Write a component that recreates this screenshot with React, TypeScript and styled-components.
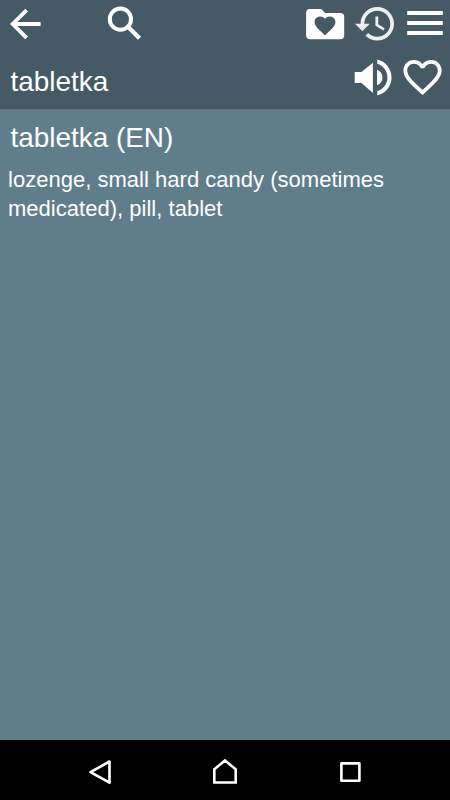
import React from "react";
import styled, { createGlobalStyle } from "styled-components";

const GlobalStyle = createGlobalStyle`
  * { box-sizing: border-box; }
  body {
    margin: 0;
    background: #607d8b;
    font-family: "Liberation Sans", Arial, sans-serif;
  }
`;

const Screen = styled.div`
  display: flex;
  flex-direction: column;
  width: 450px;
  height: 800px;
  overflow: hidden;
  background: #607d8b;
  color: #fff;
`;

const Header = styled.header`
  flex: none;
  height: 110px;
  background: #455a64;
  border-bottom: 1px solid #5b7480;
  box-shadow: inset 0 -2px 0 #4a5459;
`;

const Toolbar = styled.div`
  display: flex;
  align-items: center;
  height: 48px;
  padding: 0 5px 0 8px;
`;

const WordRow = styled.div`
  display: flex;
  align-items: center;
  height: 60px;
  padding: 0 5px 0 10.5px;
`;

const IconButton = styled.button<{ $width: number; $gap?: number }>`
  display: flex;
  flex: none;
  width: ${(p) => p.$width}px;
  height: 48px;
  margin: 0 0 0 ${(p) => p.$gap ?? 0}px;
  padding: 0;
  border: 0;
  background: none;
  color: #fff;
`;

const Glyph = styled.svg`
  display: block;
  width: 100%;
  height: 100%;
  fill: currentColor;
`;

const Spacer = styled.div`
  flex: 1;
`;

const Word = styled.h1`
  flex: 1;
  margin: 8px 0 0;
  font-size: 27.9px;
  line-height: 32px;
  font-weight: 400;
`;

const Entry = styled.main`
  flex: 1;
  padding: 12px 8px 0;
`;

const EntryTitle = styled.h2`
  margin: 0 0 11px 2.5px;
  font-size: 27.9px;
  line-height: 32px;
  font-weight: 400;
`;

const Definition = styled.p`
  margin: 0;
  font-size: 22px;
  line-height: 29px;
  letter-spacing: 0.02px;
`;

const NavBar = styled.nav`
  display: flex;
  flex: none;
  align-items: center;
  justify-content: center;
  gap: 77px;
  height: 60px;
  background: #000;
`;

const NavButton = styled(IconButton)`
  height: 60px;
`;

const NavGlyph = styled(Glyph)`
  fill: none;
  stroke: #fff;
  stroke-width: 2.6;
`;

export default function App() {
  return (
    <Screen>
      <GlobalStyle />
      <Header>
        <Toolbar>
          <IconButton $width={36} aria-label="Back">
            <Glyph viewBox="8 0 36 48">
              <path d="M26.6 10.1 12.7 24 26.6 37.9M12.7 24H40.6" fill="none" stroke="currentColor" strokeWidth="3.8" />
            </Glyph>
          </IconButton>
          <IconButton $width={36} $gap={62} aria-label="Search">
            <Glyph viewBox="106 0 36 48">
              <circle cx="120.4" cy="19.2" r="10.6" fill="none" stroke="currentColor" strokeWidth="4" />
              <path d="M128.2 27 139.5 38.2" fill="none" stroke="currentColor" strokeWidth="4.4" />
            </Glyph>
          </IconButton>
          <Spacer />
          <IconButton $width={42} aria-label="Favorites folder">
            <Glyph viewBox="304 0 42 48">
              <path
                fillRule="evenodd"
                d="M310 9H321.3L325.2 13H340.4Q344.2 13 344.2 16.8V35.3Q344.2 39.2 340.4 39.2H310Q306.1 39.2 306.1 35.3V12.8Q306.1 9 310 9ZM325 35.2 323.5 33.9C318.1 29 314.6 26 314.6 22.1 314.6 18.8 317 16.5 320.2 16.5 322.1 16.5 323.9 17.4 325 18.8 326.1 17.4 327.9 16.5 329.8 16.5 333 16.5 335.4 18.8 335.4 22.1 335.4 26 331.9 29 326.5 33.9Z"
              />
            </Glyph>
          </IconButton>
          <IconButton $width={44} $gap={7} aria-label="History">
            <Glyph viewBox="353 0 44 48">
              <path
                fill="#eceff1"
                transform="translate(353.1 1.5) scale(1.86)"
                d="M13 3c-4.97 0-9 4.03-9 9H1l3.89 3.89.07.14L9 12H6c0-3.87 3.13-7 7-7s7 3.13 7 7-3.13 7-7 7c-1.93 0-3.68-.79-4.94-2.06l-1.42 1.42C8.27 19.99 10.51 21 13 21c4.97 0 9-4.03 9-9s-4.03-9-9-9zm-1 5v5l4.28 2.54.72-1.21-3.5-2.08V8H12z"
              />
            </Glyph>
          </IconButton>
          <IconButton $width={40} $gap={8} aria-label="Menu">
            <Glyph viewBox="405 0 40 48">
              <path d="M407.2 11h35.6v3.9h-35.6zM407.2 21h35.6v3.9h-35.6zM407.2 31h35.6v3.9h-35.6z" />
            </Glyph>
          </IconButton>
        </Toolbar>
        <WordRow>
          <Word>tabletka</Word>
          <IconButton $width={42} aria-label="Pronounce">
            <Glyph viewBox="352 54 42 48">
              <path d="M354.700 72.100H361.500L372.900 62.700V92.900L361.500 82.900H354.700ZM377 69.700Q382.400 72 382.400 77.500T377 85.300Z" />
              <path
                transform="translate(348.7 53) scale(2.04)"
                d="M14 3.230v2.060c2.890.86 5 3.540 5 6.710s-2.110 5.850-5 6.710v2.060c4.010-.91 7-4.490 7-8.770s-2.990-7.860-7-8.770z"
              />
            </Glyph>
          </IconButton>
          <IconButton $width={44} $gap={7} aria-label="Add to favorites">
            <Glyph viewBox="401 54 44 48">
              <path
                transform="translate(399.600 54.300) scale(1.910)"
                d="M16.500 3c-1.740 0-3.410.81-4.500 2.090C10.910 3.810 9.240 3 7.500 3 4.420 3 2 5.420 2 8.500c0 3.780 3.400 6.860 8.550 11.540L12 21.350l1.450-1.320C18.600 15.360 22 12.280 22 8.500 22 5.420 19.580 3 16.500 3zm-4.400 15.550l-.1.100-.1-.1C7.140 14.240 4 11.390 4 8.500 4 6.500 5.500 5 7.500 5c1.540 0 3.040.99 3.570 2.360h1.870C13.460 5.990 14.960 5 16.500 5c2 0 3.500 1.500 3.500 3.500 0 2.890-3.140 5.740-7.900 10.050z"
              />
            </Glyph>
          </IconButton>
        </WordRow>
      </Header>
      <Entry>
        <EntryTitle>tabletka (EN)</EntryTitle>
        <Definition>lozenge, small hard candy (sometimes medicated), pill, tablet</Definition>
      </Entry>
      <NavBar>
        <NavButton $width={48} aria-label="System back">
          <NavGlyph viewBox="76 740 48 60">
            <path d="M109.500 761.500V782.700L90.500 772.100Z" strokeLinejoin="round" />
          </NavGlyph>
        </NavButton>
        <NavButton $width={48} aria-label="System home">
          <NavGlyph viewBox="201 740 48 60">
            <path d="M214.300 782.500V769.300L225 760.500 235.700 769.300V782.500Z" />
          </NavGlyph>
        </NavButton>
        <NavButton $width={48} aria-label="Recent apps">
          <NavGlyph viewBox="326 740 48 60">
            <path d="M341.400 763.400H359.400V780.700H341.400Z" strokeLinejoin="round" />
          </NavGlyph>
        </NavButton>
      </NavBar>
    </Screen>
  );
}
